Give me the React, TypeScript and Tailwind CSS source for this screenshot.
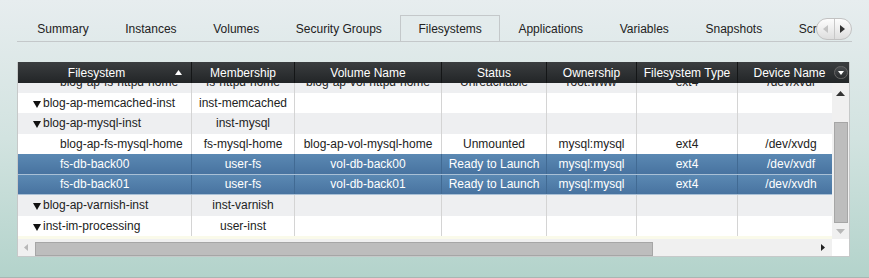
import React from 'react'

const cols = [
  { w: 'w-[174px]' },
  { w: 'w-[103px]' },
  { w: 'w-[147px]' },
  { w: 'w-[105px]' },
  { w: 'w-[90px]' },
  { w: 'w-[101px]' },
  { w: 'w-[106px]' },
]

const headers = ['Filesystem', 'Membership', 'Volume Name', 'Status', 'Ownership', 'Filesystem Type', 'Device Name']

const tabs = ['Summary', 'Instances', 'Volumes', 'Security Groups', 'Filesystems', 'Applications', 'Variables', 'Snapshots', 'Scripts']

type Row = {
  cells: string[]
  tree?: boolean
  shade: 'white' | 'gray' | 'sel'
}

// first row is scrolled half out of view
const rows: Row[] = [
  { cells: ['blog-ap-fs-httpd-home', 'fs-httpd-home', 'blog-ap-vol-httpd-home', 'Unreachable', 'root:www', 'ext4', '/dev/xvdi'], shade: 'gray' },
  { cells: ['blog-ap-memcached-inst', 'inst-memcached', '', '', '', '', ''], tree: true, shade: 'white' },
  { cells: ['blog-ap-mysql-inst', 'inst-mysql', '', '', '', '', ''], tree: true, shade: 'gray' },
  { cells: ['blog-ap-fs-mysql-home', 'fs-mysql-home', 'blog-ap-vol-mysql-home', 'Unmounted', 'mysql:mysql', 'ext4', '/dev/xvdg'], shade: 'white' },
  { cells: ['fs-db-back00', 'user-fs', 'vol-db-back00', 'Ready to Launch', 'mysql:mysql', 'ext4', '/dev/xvdf'], shade: 'sel' },
  { cells: ['fs-db-back01', 'user-fs', 'vol-db-back01', 'Ready to Launch', 'mysql:mysql', 'ext4', '/dev/xvdh'], shade: 'sel' },
  { cells: ['blog-ap-varnish-inst', 'inst-varnish', '', '', '', '', ''], tree: true, shade: 'gray' },
  { cells: ['inst-im-processing', 'user-inst', '', '', '', '', ''], tree: true, shade: 'white' },
]

function TreeArrow() {
  return (
    <svg width="8" height="7" viewBox="0 0 8 7" className="mr-[2px] mt-[3px] shrink-0">
      <path d="M0 0 L8 0 L4 7 Z" fill="#111" />
    </svg>
  )
}

function Tabs() {
  return (
    <div className="relative mx-[17px] flex h-[42px] items-end overflow-hidden border-b border-[#c4c8ca]">
      <div className="ml-[2px] flex items-end">
        {tabs.map((t) => {
          const active = t === 'Filesystems'
          return (
            <div
              key={t}
              className={`-mb-px flex h-[27px] items-center whitespace-nowrap px-[17.3px] ${
                active ? 'border border-b-0 border-[#c4c8ca] bg-[#e3ebec]' : 'border border-transparent'
              }`}
            >
              {t}
            </div>
          )
        })}
      </div>
      <div className="absolute right-0 top-[18px] flex h-[22px] w-[36px] overflow-hidden rounded-full border border-[#c2c2c2] bg-gradient-to-b from-[#fdfdfd] to-[#dedede]">
        <div className="flex flex-1 items-center justify-center border-r border-[#c8c8c8]">
          <svg width="5" height="8" viewBox="0 0 5 8"><path d="M5 0 L0 4 L5 8 Z" fill="#c4c4c4" /></svg>
        </div>
        <div className="flex flex-1 items-center justify-center">
          <svg width="5" height="8" viewBox="0 0 5 8"><path d="M0 0 L5 4 L0 8 Z" fill="#333" /></svg>
        </div>
      </div>
    </div>
  )
}

function Header() {
  return (
    <div className="relative flex h-[21px] bg-gradient-to-b from-[#3b3e40] to-[#222527] text-white">
      {headers.map((h, i) => {
        const last = i === 6
        return (
          <div
            key={h}
            className={`${last ? 'w-[111px] pr-[8px]' : `${cols[i].w} border-r border-[#141617]`} relative flex shrink-0 items-center justify-center ${
              i === 0 ? 'pr-[16px]' : ''
            }`}
          >
            {h}
            {i === 0 && (
              <svg width="7" height="5" viewBox="0 0 7 5" className="absolute right-[9px] top-[8px]">
                <path d="M0 5 L3.5 0 L7 5 Z" fill="#fff" />
              </svg>
            )}
          </div>
        )
      })}
      <div className="absolute right-[1px] top-[4px] flex h-[13px] w-[14px] items-center justify-center rounded-full border border-[#666] bg-gradient-to-b from-[#4a4d50] to-[#2a2c2e]">
        <svg width="6" height="4" viewBox="0 0 6 4"><path d="M0 0 L6 0 L3 4 Z" fill="#fff" /></svg>
      </div>
    </div>
  )
}

function Body() {
  return (
    <div className="flex h-[156px]">
      <div className="h-full w-[814px] overflow-hidden bg-[#fafaea]">
        <div className="-mt-[11px]">
          {rows.map((r, ri) => {
            const sel = r.shade === 'sel'
            const bg = sel
              ? 'bg-gradient-to-b from-[#5b89b3] to-[#4873a0] text-white border-b border-[#a9c0d6]'
              : r.shade === 'gray'
              ? 'bg-[#eeeff1] text-[#222]'
              : 'bg-white text-[#222]'
            return (
              <div key={ri} className={`flex h-[20.5px] ${bg}`}>
                {r.cells.map((c, ci) => (
                  <div
                    key={ci}
                    className={`${cols[ci].w} flex shrink-0 items-center whitespace-nowrap ${
                      ci < 6 ? (sel ? 'border-r border-[#416a93]' : 'border-r border-[#d4d4d4]') : ''
                    } ${ci === 0 ? (r.tree ? 'pl-[15px]' : 'pl-[42px]') : 'justify-center'}`}
                  >
                    {ci === 0 && r.tree && <TreeArrow />}
                    {c}
                  </div>
                ))}
              </div>
            )
          })}
        </div>
      </div>
      <div className="flex h-full w-[17px] flex-col items-center bg-[#f0f0f0]">
        <svg width="9" height="5" viewBox="0 0 9 5" className="mt-[8px]"><path d="M0 5 L4.5 0 L9 5 Z" fill="#333" /></svg>
        <div className="mt-[26px] h-[101px] w-[14px] border border-[#a6a6a6] bg-[#bdbdbd]" />
        <svg width="9" height="5" viewBox="0 0 9 5" className="mt-[6px]"><path d="M0 0 L9 0 L4.5 5 Z" fill="#b8b8b8" /></svg>
      </div>
    </div>
  )
}

function HScroll() {
  return (
    <div className="flex h-[17px]">
      <div className="flex w-[814px] items-center bg-[#f0f0f0]">
        <svg width="4" height="7" viewBox="0 0 4 7" className="ml-[6px]"><path d="M4 0 L0 3.5 L4 7 Z" fill="#b8b8b8" /></svg>
        <div className="ml-[7px] mt-[2px] h-[14px] w-[618px] border border-[#a6a6a6] bg-[#bdbdbd]" />
        <svg width="4" height="7" viewBox="0 0 4 7" className="ml-auto mr-[7px]"><path d="M0 0 L4 3.5 L0 7 Z" fill="#222" /></svg>
      </div>
      <div className="w-[17px] bg-white" />
    </div>
  )
}

export default function App() {
  return (
    <div
      className="h-[278px] w-[869px] overflow-hidden border-b border-[#a9b6b3] bg-gradient-to-b from-[#e7edef] via-[#d2e3e0] to-[#b3d3cb] text-[12px] text-[#222]"
      style={{ fontFamily: '"Liberation Sans", Arial, sans-serif' }}
    >
      <Tabs />
      <div className="mx-[17px] mt-[20px] w-[833px] border border-t-0 border-[#c6c9c9] bg-white">
        <Header />
        <Body />
        <HScroll />
      </div>
    </div>
  )
}
